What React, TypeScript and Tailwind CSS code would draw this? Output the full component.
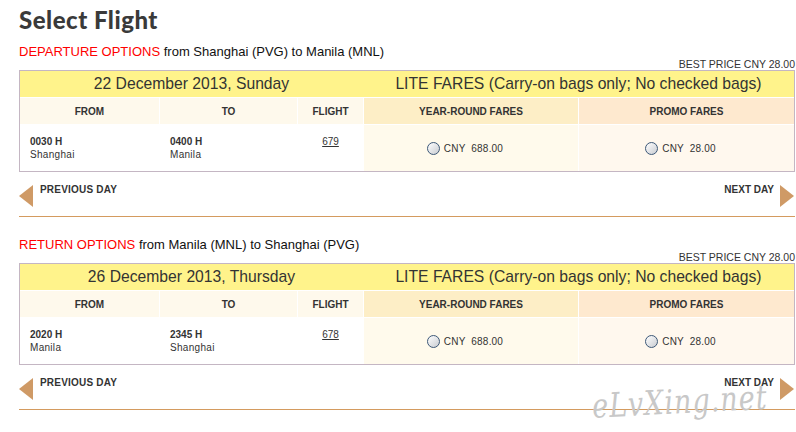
import React from "react";

const F = { fontFamily: '"Liberation Sans", Arial, sans-serif' };

function Radio() {
  return (
    <span className="inline-block w-[13px] h-[13px] rounded-full border border-[#3d5877] bg-gradient-to-br from-[#ffffff] to-[#c9ccd1] shrink-0" />
  );
}

function Table({ date, dep, depCity, arr, arrCity, flight }: { date: string; dep: string; depCity: string; arr: string; arrCity: string; flight: string }) {
  return (
    <div className="border border-[#c4b6c3] w-[776px] bg-white text-[#333]">
      <div className="flex h-[26px] bg-[#fff38b] items-center">
        <div className="w-[343px] text-center text-[15.7px] leading-none">{date}</div>
        <div className="flex-1 text-center text-[15.7px] leading-none">LITE FARES (Carry-on bags only; No checked bags)</div>
      </div>
      <div className="grid grid-cols-[139px_137px_65px_214px_1fr] gap-px bg-white pt-px">
        <div className="h-[26px] bg-[#fef9ec] flex items-center justify-center text-[10px] font-bold">FROM</div>
        <div className="h-[26px] bg-[#fef9ec] flex items-center justify-center text-[10px] font-bold">TO</div>
        <div className="h-[26px] bg-[#fef9ec] flex items-center justify-center text-[10px] font-bold">FLIGHT</div>
        <div className="h-[26px] bg-[#fdeec6] flex items-center justify-center text-[10px] font-bold">YEAR-ROUND FARES</div>
        <div className="h-[26px] bg-[#fee9cf] flex items-center justify-center text-[10px] font-bold">PROMO FARES</div>

        <div className="h-[46px] bg-white pl-[10px] pt-[10px] text-[10px] leading-[13px]">
          <div className="font-bold">{dep}</div>
          <div className="tracking-[0.3px]">{depCity}</div>
        </div>
        <div className="h-[46px] bg-white pl-[10px] pt-[10px] text-[10px] leading-[13px]">
          <div className="font-bold">{arr}</div>
          <div className="tracking-[0.3px]">{arrCity}</div>
        </div>
        <div className="h-[46px] bg-white pt-[10px] text-[10px] leading-[13px] text-center">
          <span className="underline">{flight}</span>
        </div>
        <div className="h-[46px] bg-[#fffaec] flex items-center justify-center gap-[4px] pr-[12px] text-[10px]">
          <Radio />
          <span className="whitespace-pre tracking-[0.2px]">CNY  688.00</span>
        </div>
        <div className="h-[46px] bg-[#fff8ee] flex items-center justify-center gap-[4px] pr-[12px] text-[10px]">
          <Radio />
          <span className="whitespace-pre tracking-[0.2px]">CNY  28.00</span>
        </div>
      </div>
    </div>
  );
}

function Nav() {
  return (
    <div className="h-[45px] border-b border-[#d49b5f] w-[776px] flex justify-between pt-[13px] pr-[1px]">
      <div className="flex items-start">
        <div className="w-0 h-0 border-y-[11px] border-y-transparent border-r-[14px] border-r-[#cf9a66]" />
        <div className="ml-[7px] text-[10px] font-bold leading-[12px] mt-[-1px] text-[#333] tracking-[0.2px]">PREVIOUS DAY</div>
      </div>
      <div className="flex items-start">
        <div className="relative z-10 mr-[6px] text-[10px] font-bold leading-[12px] mt-[-1px] text-[#333]">NEXT DAY</div>
        <div className="w-0 h-0 border-y-[11px] border-y-transparent border-l-[14px] border-l-[#cf9a66]" />
      </div>
    </div>
  );
}

function Section({ label, route, ...t }: { label: string; route: string; date: string; dep: string; depCity: string; arr: string; arrCity: string; flight: string }) {
  return (
    <div>
      <div className="text-[13px] leading-[16px] h-[17px] pt-[3px]">
        <span className="text-[#ff0000]">{label}</span> <span className="text-[#111]">{route}</span>
      </div>
      <div className="w-[776px] text-right text-[10.5px] leading-[12px] h-[12px] text-[#333]">BEST PRICE CNY 28.00</div>
      <Table {...t} />
      <Nav />
    </div>
  );
}

export default function App() {
  return (
    <div className="w-[796px] h-[432px] bg-white relative overflow-hidden pl-[19px]" style={F}>
      <div className="h-[41px] pt-[6px]">
        <div className="text-[24px] leading-[28px] text-[#3a3a3a] tracking-[0.5px]" style={{ fontFamily: 'Lato, sans-serif', fontWeight: 900 }}>Select Flight</div>
      </div>
      <Section label="DEPARTURE OPTIONS" route="from Shanghai (PVG) to Manila (MNL)" date="22 December 2013, Sunday" dep="0030 H" depCity="Shanghai" arr="0400 H" arrCity="Manila" flight="679" />
      <div className="h-[17px]" />
      <Section label="RETURN OPTIONS" route="from Manila (MNL) to Shanghai (PVG)" date="26 December 2013, Thursday" dep="2020 H" depCity="Manila" arr="2345 H" arrCity="Shanghai" flight="678" />
      <div className="absolute left-[592px] top-[384px] text-[27px] leading-[36px] italic text-[#c8c8c8] tracking-[1px] -rotate-3 scale-y-125" style={{ fontFamily: '"DejaVu Serif", serif' }}>eLvXing.net</div>
    </div>
  );
}
